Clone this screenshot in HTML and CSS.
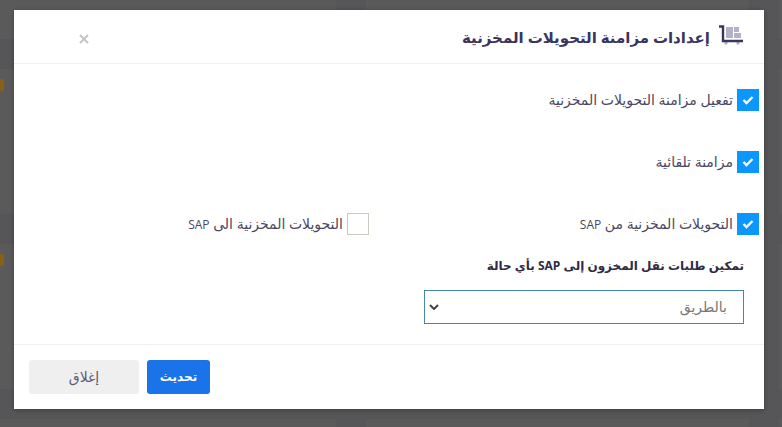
FILE: index.html
```html
<!DOCTYPE html>
<html lang="ar" dir="rtl">
<head>
<meta charset="utf-8">
<title>إعدادات مزامنة التحويلات المخزنية</title>
<link rel="stylesheet" href="styles.css">
</head>
<body>
<div class="page" aria-hidden="true">
  <div class="panel"></div><div class="panel"></div><div class="panel"></div>
  <div class="panel"></div><div class="panel"></div><div class="panel"><span class="tag"></span></div>
  <div class="panel"></div><div class="panel"></div><div class="panel"><span class="tag"></span></div>
  <div class="panel"></div><div class="panel"></div><div class="panel"></div>
</div>
<div class="overlay">
  <form class="modal" role="dialog" aria-labelledby="modal-title">
    <header class="modal-header">
      <svg class="cart" viewBox="0 0 26 20" aria-hidden="true">
        <path class="cart-box" d="M8 2h7v11H8zM16 2h5v5h-5zM16 8h7v5h-7z"/>
        <circle class="cart-box" cx="8" cy="18" r="1.700"/>
        <circle class="cart-box" cx="20" cy="18" r="1.700"/>
        <path class="cart-frame" d="M1 1.500h4v14.500H25"/>
      </svg>
      <h1 class="modal-title" id="modal-title">إعدادات مزامنة التحويلات المخزنية</h1>
      <button class="close" type="button" aria-label="إغلاق">
        <svg viewBox="0 0 10 10"><path d="M1 1l8 8M9 1l-8 8"/></svg>
      </button>
    </header>
    <div class="modal-body">
      <div class="options">
        <label class="option option-wide"><input type="checkbox" checked><span>تفعيل مزامنة التحويلات المخزنية</span></label>
        <label class="option option-wide"><input type="checkbox" checked><span>مزامنة تلقائية</span></label>
        <label class="option"><input type="checkbox" checked><span>التحويلات المخزنية من <span class="latin">SAP</span></span></label>
        <label class="option"><input type="checkbox"><span>التحويلات المخزنية الى <span class="latin">SAP</span></span></label>
      </div>
      <div class="field">
        <label class="field-label" for="status">تمكين طلبات نقل المخزون إلى SAP بأي حالة</label>
        <div class="select-wrap">
          <select class="select" id="status"><option>بالطريق</option></select>
          <svg class="chevron" viewBox="0 0 10 6" aria-hidden="true"><path d="M1 1l4 4 4-4"/></svg>
        </div>
      </div>
    </div>
    <footer class="modal-footer">
      <button class="btn btn-primary" type="submit">تحديث</button>
      <button class="btn btn-plain" type="button">إغلاق</button>
    </footer>
  </form>
</div>
</body>
</html>
```
FILE: styles.css
```css
* { box-sizing: border-box; }

body {
  margin: 0;
  min-height: 100vh;
  overflow: hidden;
  background: #565659;
  color: #4b4762;
  font: 12px/20px "Open Sans", "DejaVu Sans", sans-serif;
}

/* Dimmed dashboard behind the dialog */
.page {
  position: absolute;
  inset: 0;
  display: grid;
  grid-template-columns: 3px 383px 1fr;
  grid-template-rows: 39px 145px 145px 1fr;
  gap: 30px;
}
.panel { padding-top: 10px; background: #5a5a5a; }
.tag {
  display: block;
  width: 4px;
  height: 12px;
  margin-right: auto;
  border-radius: 0 2px 2px 0;
  background: #8a5f17;
}

.overlay {
  position: relative;
  padding: 10px 18px 18px 14px;
}
.modal {
  background: #fff;
  box-shadow: 0 1px 4px rgba(0, 0, 0, .3);
}

.modal-header {
  display: flex;
  align-items: center;
  height: 54px;
  padding: 4px 20px 0 58px;
  border-bottom: 1px solid #efefef;
}
.cart { width: 26px; height: 20px; margin-bottom: 8px; }
.cart-box { fill: #b3b1c8; }
.cart-frame { fill: none; stroke: #3a3560; stroke-width: 2.4; }
.modal-title {
  margin: 0 8px 4px auto;
  color: #3a3560;
  font-size: 15px;
  line-height: 24px;
}
.close {
  display: flex;
  padding: 7px;
  border: 0;
  background: none;
}
.close svg { width: 10px; height: 10px; }
.close path { fill: none; stroke: #c4c4c4; stroke-width: 2; }

.modal-body { padding: 24px 0 20px; }
.options {
  display: grid;
  grid-template-columns: 390px 1fr;
  row-gap: 38px;
  padding: 0 5px;
}
.option {
  display: flex;
  align-items: center;
  gap: 4px;
  height: 24px;
  font-size: 14px;
  white-space: nowrap;
}
.latin { font-size: 12px; }
.option-wide { grid-column: 1 / -1; }
.option input {
  flex: none;
  appearance: none;
  width: 22px;
  height: 22px;
  margin: 0;
  border: 1px solid #cbc9c0;
  background: #fff;
}
.option input:checked {
  border-color: #0c97ff;
  background: #0c97ff url("data:image/svg+xml,%3Csvg xmlns='http://www.w3.org/2000/svg' viewBox='0 0 12 10'%3E%3Cpath d='M1.500 5l3 3 6-6' fill='none' stroke='white' stroke-width='2.400'/%3E%3C/svg%3E") center / 12px 10px no-repeat;
}

.field { padding: 20px 20px 0; }
.field-label {
  display: block;
  margin-bottom: 14px;
  color: #2f2b45;
  font-weight: 700;
}
.select-wrap { position: relative; width: 320px; }
.select {
  display: block;
  appearance: none;
  width: 100%;
  height: 34px;
  padding: 0 16px;
  border: 1px solid #4286ab;
  border-radius: 0;
  background: #fff;
  color: #777;
  font: inherit;
  font-size: 14px;
}
.chevron {
  position: absolute;
  left: 5px;
  top: 14px;
  width: 10px;
  height: 6px;
  fill: none;
  stroke: #444;
  stroke-width: 2;
}

.modal-footer {
  display: flex;
  justify-content: flex-end;
  gap: 8px;
  padding: 15px;
  border-top: 1px solid #efefef;
}
.btn {
  height: 34px;
  padding: 0 12px;
  border: 0;
  border-radius: 3px;
  font: inherit;
}
.btn-primary { min-width: 63px; background: #1a73e8; color: #fff; font-weight: 700; }
.btn-plain { min-width: 110px; background: #efefef; color: #5c586f; font-size: 14px; }
```
